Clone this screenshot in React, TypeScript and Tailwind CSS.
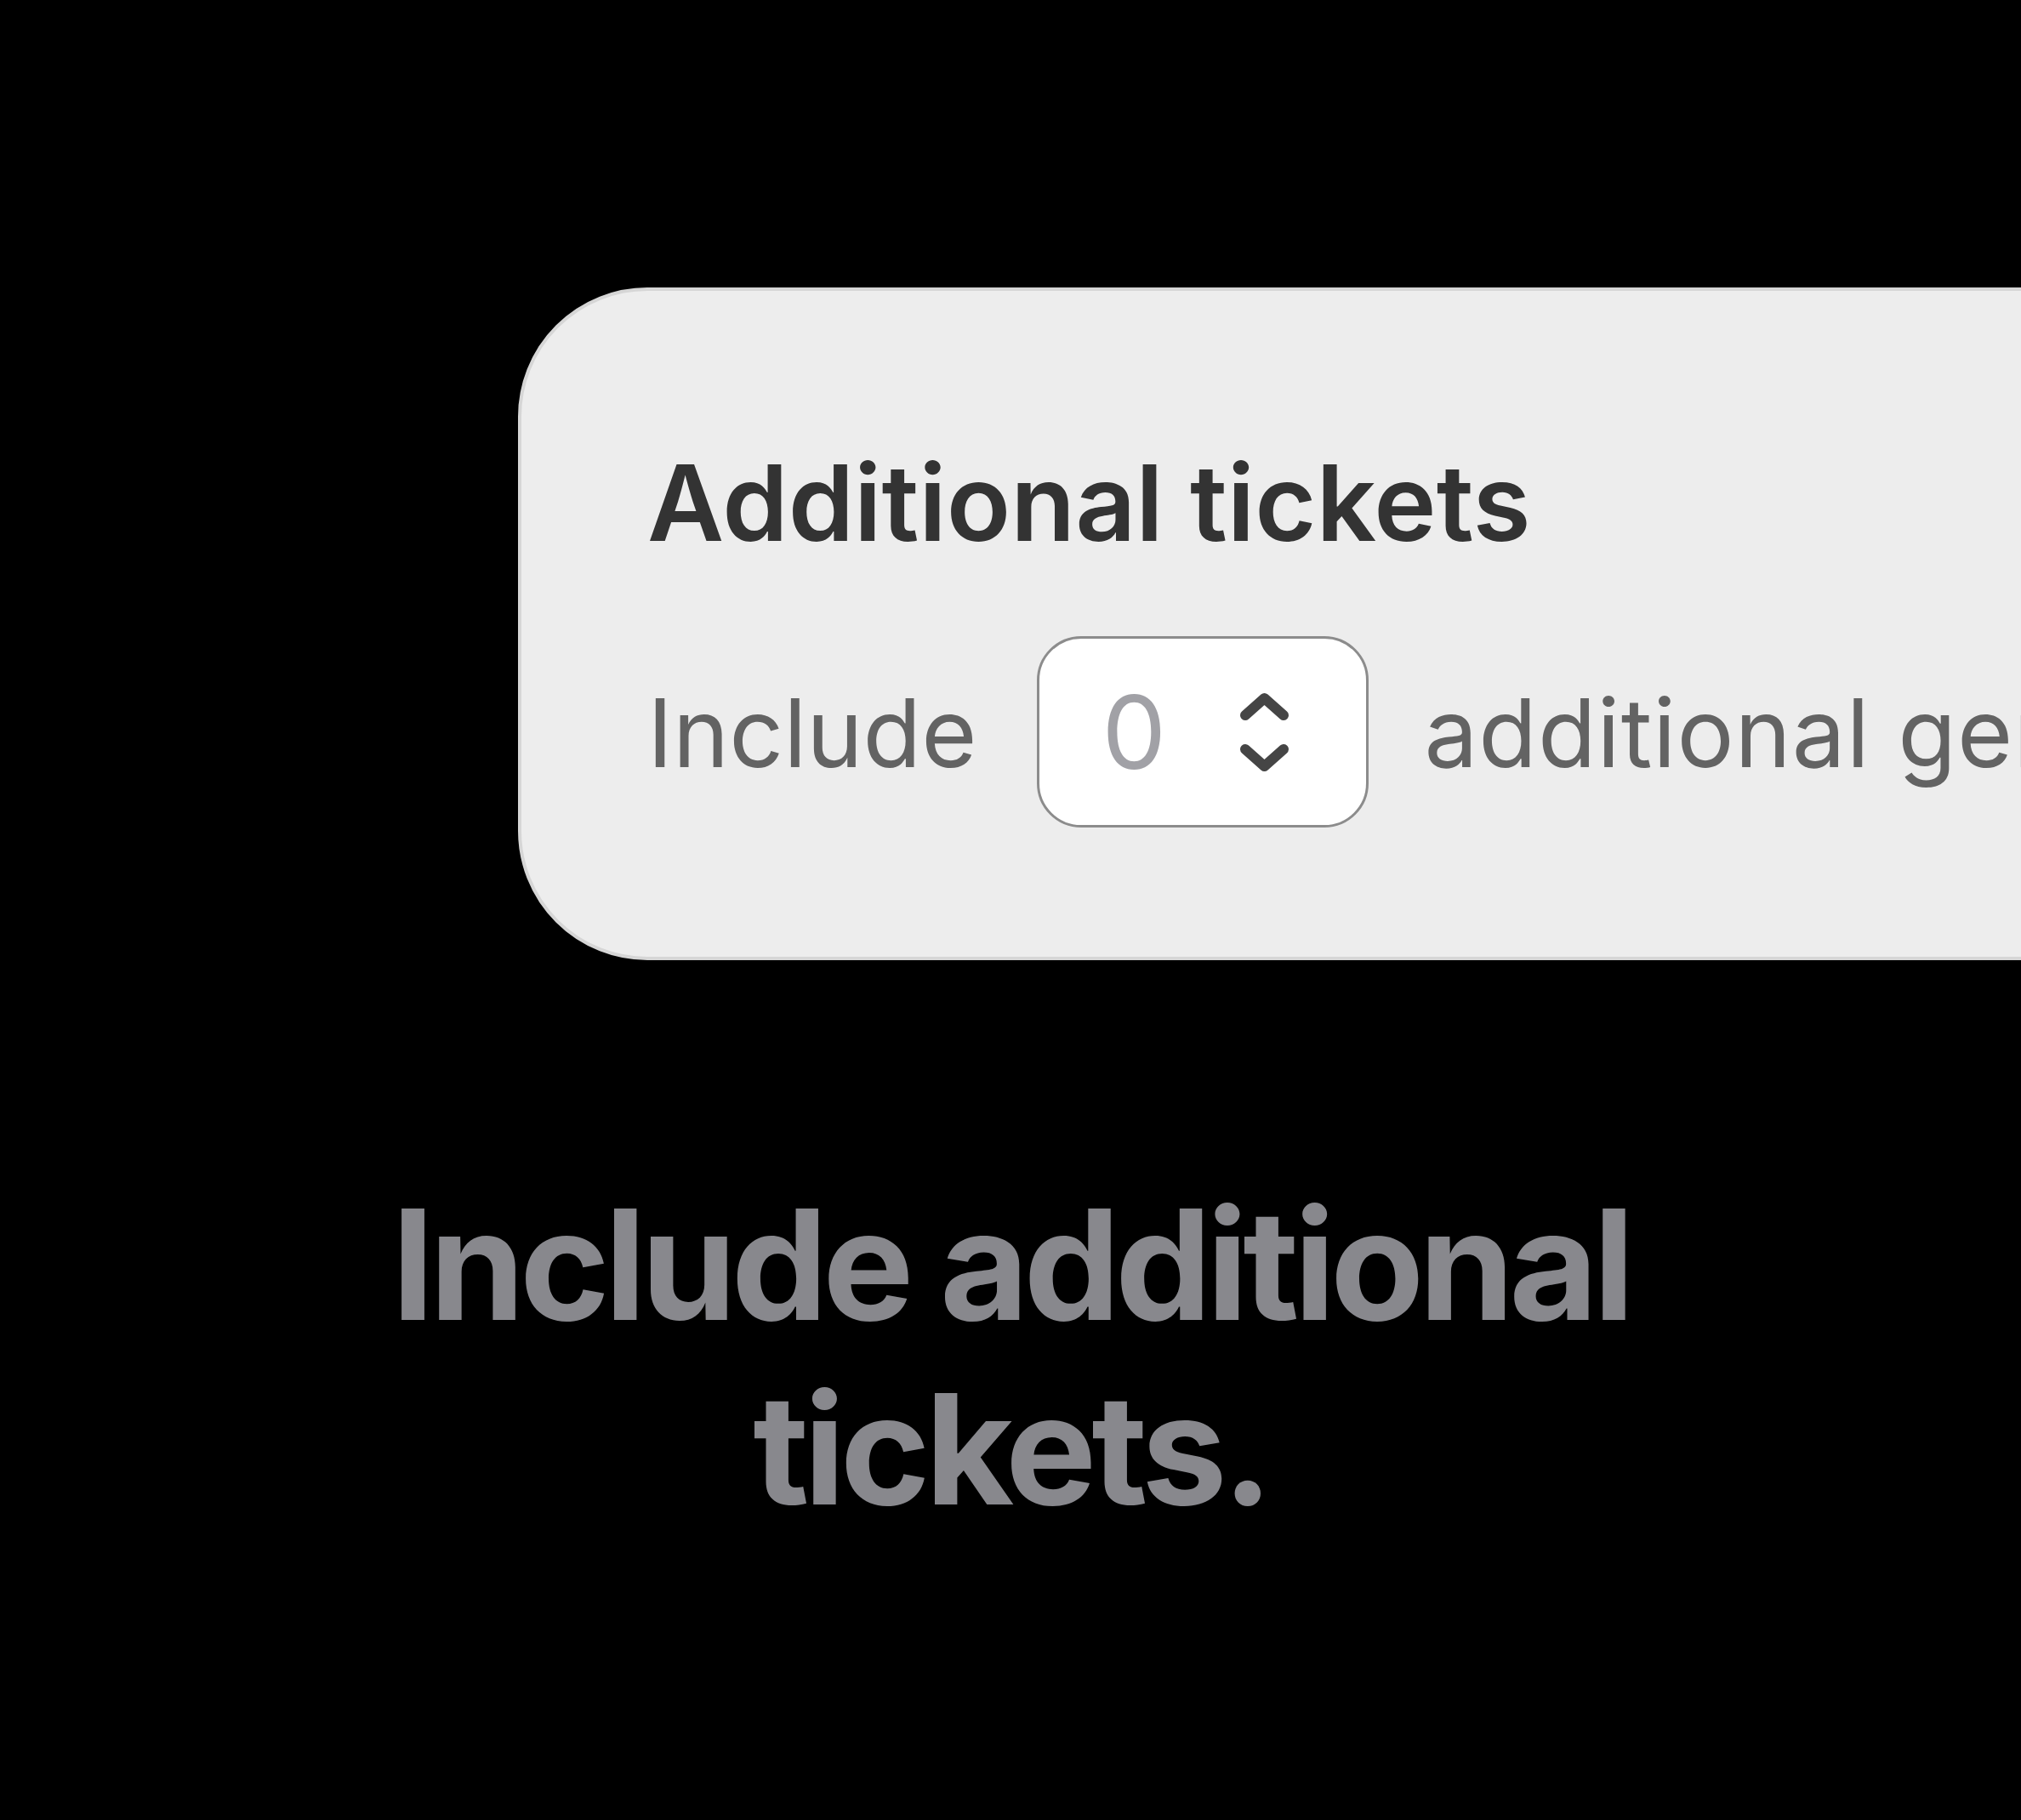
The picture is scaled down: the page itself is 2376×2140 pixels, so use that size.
import React from "react";

export default function App() {
  return (
    <div
      className="w-[2376px] h-[2140px] bg-black overflow-hidden"
      style={{ fontFamily: "Inter, 'Noto Sans', sans-serif" }}
    >
      <div className="pt-[338px] pl-[609px]">
        <div className="w-[2400px] h-[791px] bg-[#ededed] border-[4px] border-[#d6d6d6] rounded-[152px] pl-[148px] pt-[187px]">
          <h2 className="text-[124px] leading-[124px] font-semibold text-[#333333] whitespace-nowrap">
            Additional tickets
          </h2>
          <div className="mt-[95px] flex items-center whitespace-nowrap">
            <span className="shrink-0 text-[112px] leading-[120px] text-[#636363]">Include</span>
            <div className="shrink-0 ml-[71px] w-[390px] h-[225px] bg-white border-[3px] border-[#8c8c8c] rounded-[52px] flex items-center pl-[73px]">
              <span className="text-[120px] leading-[120px] text-[#a1a1a6]">0</span>
              <svg
                className="ml-[87px] shrink-0"
                width="57"
                height="92"
                viewBox="0 0 57 92"
                fill="none"
                stroke="#454545"
                strokeWidth="12"
                strokeLinecap="round"
                strokeLinejoin="round"
              >
                <path d="M6 26 L28.5 6 L51 26" />
                <path d="M6 66 L28.5 86 L51 66" />
              </svg>
            </div>
            <span className="shrink-0 ml-[65px] text-[112px] leading-[120px] tracking-[1px] text-[#636363]">
              additional general admission tickets
            </span>
          </div>
        </div>
      </div>
      <p className="mt-[249px] mx-auto w-[1700px] text-center text-[180px] leading-[217px] font-bold text-[#88888d] tracking-[-6px]">
        Include additional tickets.
      </p>
    </div>
  );
}
